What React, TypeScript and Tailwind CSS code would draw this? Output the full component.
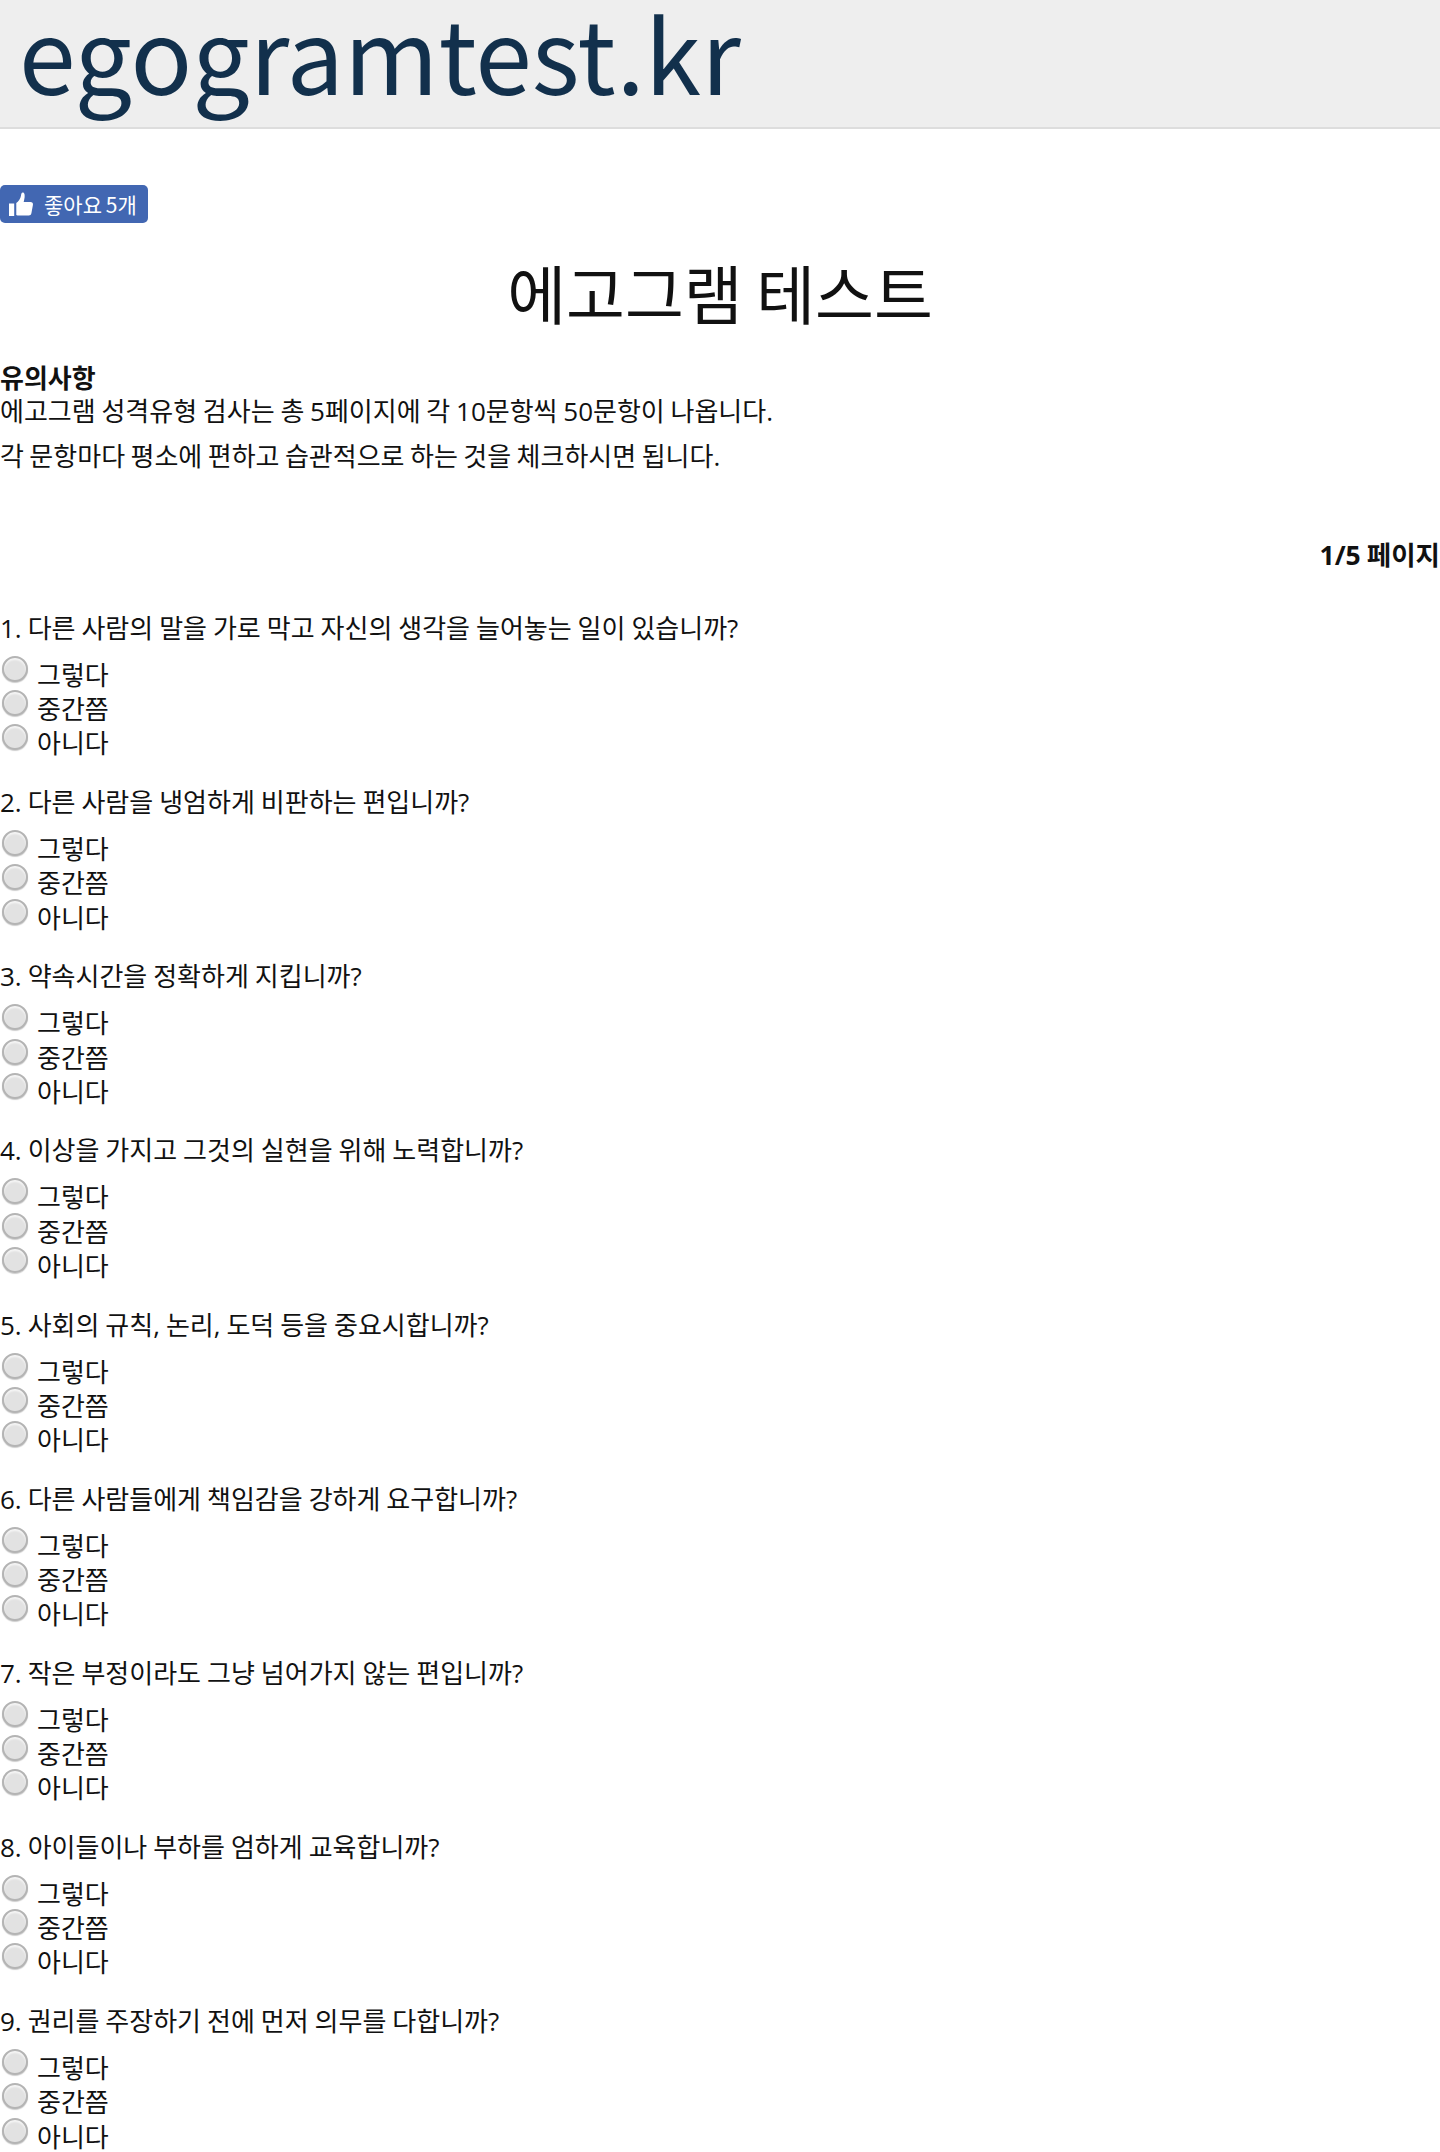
const questions = [
  "1. 다른 사람의 말을 가로 막고 자신의 생각을 늘어놓는 일이 있습니까?",
  "2. 다른 사람을 냉엄하게 비판하는 편입니까?",
  "3. 약속시간을 정확하게 지킵니까?",
  "4. 이상을 가지고 그것의 실현을 위해 노력합니까?",
  "5. 사회의 규칙, 논리, 도덕 등을 중요시합니까?",
  "6. 다른 사람들에게 책임감을 강하게 요구합니까?",
  "7. 작은 부정이라도 그냥 넘어가지 않는 편입니까?",
  "8. 아이들이나 부하를 엄하게 교육합니까?",
  "9. 권리를 주장하기 전에 먼저 의무를 다합니까?",
];
const options = ["그렇다", "중간쯤", "아니다"];

function Radio() {
  return (
    <span className="block w-[26px] h-[26px] shrink-0 rounded-full border-2 border-[#b4b4b4] bg-[#e2e2e2] shadow-[inset_0_2px_2px_rgba(255,255,255,0.7),0_1px_1px_rgba(0,0,0,0.2)]" />
  );
}

export default function App() {
  return (
    <div className="h-[2152px] overflow-hidden bg-white text-[#111] font-['Open_Sans','Noto_Sans_CJK_KR',sans-serif] text-[26px] leading-[34px] [word-spacing:-0.8px]">
      <header className="h-[129px] bg-[#eeeeee] border-b-2 border-[#dddddd] pl-[19px]">
        <div className="font-['Noto_Sans_CJK_KR',sans-serif] text-[#12304c] text-[102px] leading-[102px]">egogramtest.kr</div>
      </header>
      <div className="pt-[56px]">
        <div className="flex items-center w-[148px] h-[38px] rounded-[5px] bg-[#4267b2] text-white text-[21px] pl-[9px] gap-[10px] font-['Noto_Sans_CJK_KR',sans-serif]">
          <svg viewBox="0 0 24 24" className="w-[25px] h-[25px]" fill="white">
            <path d="M0 11h5v12H0zM7 22V10.500c2-1.500 4-4 4.500-7 .2-1.500.5-3 1.700-3 1.800 0 2 2.500 1.800 4.500-.1 1.500-.6 3-.9 4.500h6.400c1.800 0 2.800 1.200 2.500 2.800l-1.500 8.200c-.3 1.500-1.200 2-2.500 2H9.500C8.500 22.500 7.800 22.300 7 22z" />
          </svg>
          <span>좋아요 5개</span>
        </div>
        <h1 className="mt-[26px] text-center text-[64px] leading-[84px] font-['Noto_Sans_CJK_KR',sans-serif] font-normal">에고그램 테스트</h1>
        <div className="mt-[28px] h-[33px] font-bold">유의사항</div>
        <div className="[word-spacing:-1px]">에고그램 성격유형 검사는 총 5페이지에 각 10문항씩 50문항이 나옵니다.</div>
        <div className="mt-[11px] [word-spacing:-1.300px]">각 문항마다 평소에 편하고 습관적으로 하는 것을 체크하시면 됩니다.</div>
        <div className="mt-[65px] text-right font-bold text-[26.500px]">1/5 페이지</div>
        <div className="mt-[39px] flex flex-col gap-[26.600px]">
          {questions.map((q) => (
            <section key={q}>
              <div>{q}</div>
              <div className="mt-[11px] flex flex-col">
                {options.map((o) => (
                  <div key={o} className="flex h-[34.200px] items-start gap-[9px] pl-[2px]">
                    <Radio />
                    <span className="mt-[2px] block">{o}</span>
                  </div>
                ))}
              </div>
            </section>
          ))}
        </div>
      </div>
    </div>
  );
}
